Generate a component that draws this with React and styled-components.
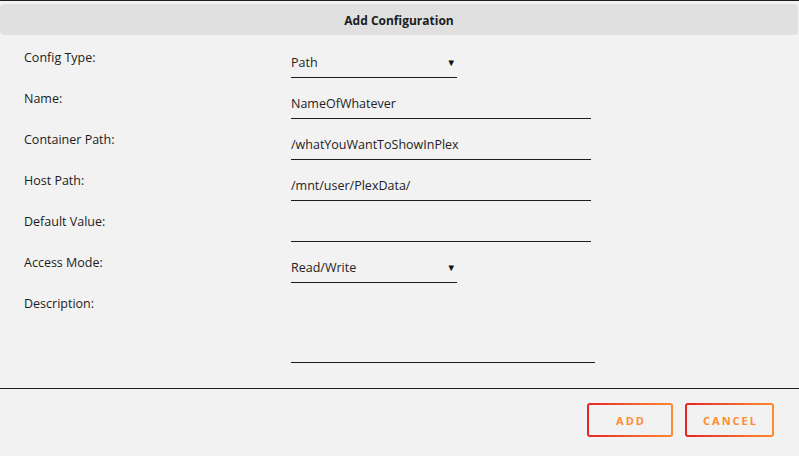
import React from 'react';
import styled, { createGlobalStyle } from 'styled-components';

const GlobalStyle = createGlobalStyle`
  html, body {
    margin: 0;
    padding: 0;
    background: #f2f2f2;
  }
  body {
    font-family: "Open Sans", "Noto Sans", sans-serif;
    color: #1c1c1c;
  }
`;

const Dialog = styled.div`
  width: 799px;
  height: 456px;
  border-top: 1px solid #1c1c1c;
  box-sizing: border-box;
  background: #f2f2f2;
  padding-top: 3px;
`;

const Header = styled.div`
  height: 31px;
  margin-right: 1px;
  padding-top: 2px;
  box-sizing: border-box;
  background: #e0e0e0;
  border-radius: 4px;
  display: flex;
  align-items: center;
  justify-content: center;
  font-size: 12px;
  font-weight: 700;
  color: #1c1c1c;
`;

const Form = styled.div`
  padding: 6px 0 0 24px;
  height: 353px;
  box-sizing: border-box;
`;

const Row = styled.div`
  display: grid;
  grid-template-columns: 267px 1fr;
  height: ${p => p.$tall ? '100px' : '41px'};
`;

const Label = styled.div`
  margin-top: 10px;
  font-size: 12.5px;
  line-height: 14px;
`;

const Field = styled.div`
  margin-top: 12px;
  width: ${p => p.$width}px;
  height: ${p => p.$height || 25}px;
  box-sizing: border-box;
  border-bottom: 1px solid #1c1c1c;
  font-size: 12.5px;
  line-height: 20px;
  color: #222;
  display: flex;
  justify-content: space-between;
  align-items: flex-start;
`;

const Arrow = styled.span`
  font-size: 9.5px;
  line-height: 20px;
  margin-right: 1px;
  color: #111;
`;

const Divider = styled.div`
  height: 1px;
  background: #1c1c1c;
`;

const Footer = styled.div`
  display: flex;
  justify-content: flex-end;
  gap: 12px;
  padding: 14px 25px 0 0;
`;

const Button = styled.button`
  width: ${p => p.$width}px;
  height: 34px;
  border: 2px solid transparent;
  border-radius: 3px;
  background:
    linear-gradient(#f2f2f2, #f2f2f2) padding-box,
    linear-gradient(90deg, #e22828, #ff8b2f) border-box;
  color: #ff8b2f;
  font-family: "Open Sans", sans-serif;
  font-size: 11px;
  font-weight: 700;
  letter-spacing: 2px;
  padding: 0 0 0 2px;
  cursor: pointer;
`;

const fields = [
  { label: 'Config Type:', value: 'Path', select: true },
  { label: 'Name:', value: 'NameOfWhatever' },
  { label: 'Container Path:', value: '/whatYouWantToShowInPlex' },
  { label: 'Host Path:', value: '/mnt/user/PlexData/' },
  { label: 'Default Value:', value: '' },
  { label: 'Access Mode:', value: 'Read/Write', select: true },
];

export default function App() {
  return (
    <>
      <GlobalStyle />
      <Dialog>
        <Header>Add Configuration</Header>
        <Form>
          {fields.map(f => (
            <Row key={f.label}>
              <Label>{f.label}</Label>
              <Field $width={f.select ? 166 : 300}>
                <span>{f.value}</span>
                {f.select && <Arrow>▼</Arrow>}
              </Field>
            </Row>
          ))}
          <Row $tall>
            <Label>Description:</Label>
            <Field $width={304} $height={64} />
          </Row>
        </Form>
        <Divider />
        <Footer>
          <Button $width={86}>ADD</Button>
          <Button $width={89}>CANCEL</Button>
        </Footer>
      </Dialog>
    </>
  );
}
